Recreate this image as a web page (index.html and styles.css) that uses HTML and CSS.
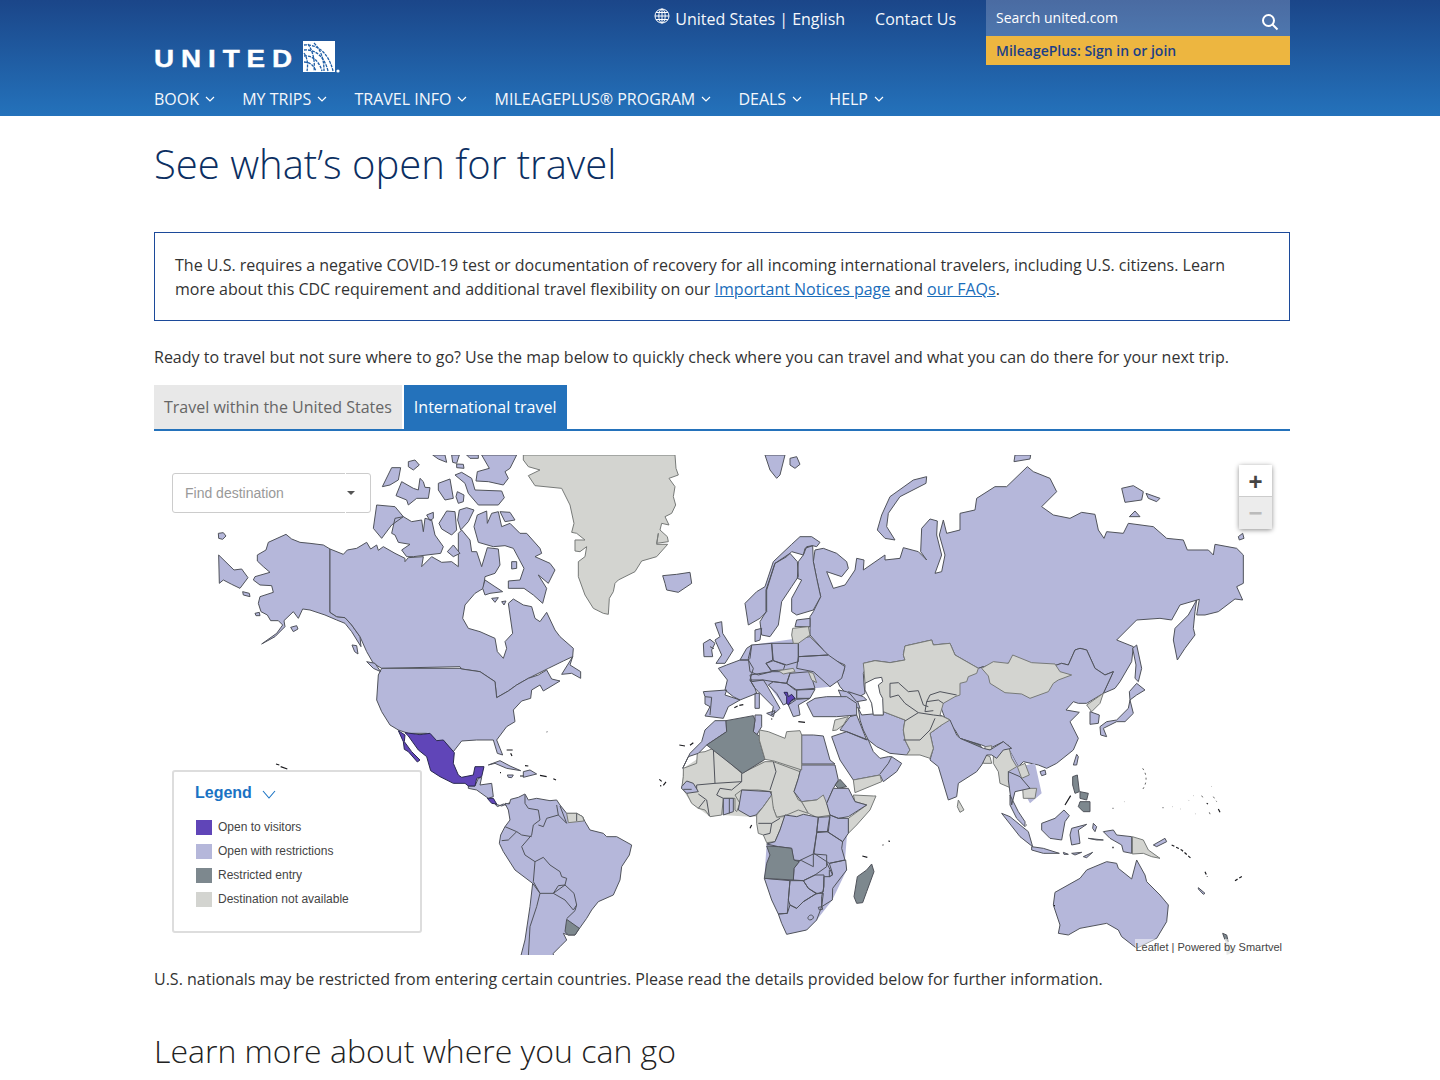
FILE: index.html
```html
<!DOCTYPE html>
<html lang="en">
<head>
<meta charset="utf-8">
<title>See what's open for travel</title>
<link rel="stylesheet" href="styles.css">
</head>
<body>
<header class="site-header">
  <div class="wrap">
    <div class="head-top">
      <a class="logo" href="#">
        <svg class="logo-svg" viewBox="0 0 187 32">
          <text class="logo-word" x="0" y="26" textLength="145" lengthAdjust="spacingAndGlyphs">UNITED</text>
          <rect class="logo-box" x="149" y="0" width="32" height="31"/>
          <g class="logo-arcs">
            <path d="M150 4C162 3 174 10 179 30"/>
            <path d="M150 9C160 8 170 14 174 30"/>
            <path d="M150 15C158 14 165 20 168 30"/>
            <path d="M150 21C156 21 160 25 162 30"/>
            <path d="M160 2C168 10 170 20 170 30"/>
            <path d="M154 3C160 12 161 22 160 30"/>
            <path d="M150 12C154 18 154 25 153 30"/>
          </g>
          <circle class="logo-reg" cx="184" cy="30" r="1.6"/>
        </svg>
      </a>
      <div class="head-links">
        <a class="head-link locale" href="#">
          <svg class="globe" viewBox="0 0 16 16"><circle cx="8" cy="8" r="7"/><ellipse cx="8" cy="8" rx="3.2" ry="7"/><path d="M1 8h14M2 4.500h12M2 11.500h12M8 1v14"/></svg>
          <span>United States | English</span>
        </a>
        <a class="head-link contact" href="#">Contact Us</a>
      </div>
      <div class="account">
        <div class="search"><span>Search united.com</span>
          <svg class="search-icon" viewBox="0 0 18 18"><circle cx="7.500" cy="7.500" r="5.500"/><path d="M11.500 11.500l5 5"/></svg>
        </div>
        <a class="signin" href="#">MileagePlus: Sign in or join</a>
      </div>
    </div>
    <nav class="main-nav">
      <a href="#">BOOK<svg class="caret" viewBox="0 0 10 6"><path d="M1 1l4 4 4-4"/></svg></a>
      <a href="#">MY TRIPS<svg class="caret" viewBox="0 0 10 6"><path d="M1 1l4 4 4-4"/></svg></a>
      <a href="#">TRAVEL INFO<svg class="caret" viewBox="0 0 10 6"><path d="M1 1l4 4 4-4"/></svg></a>
      <a href="#">MILEAGEPLUS® PROGRAM<svg class="caret" viewBox="0 0 10 6"><path d="M1 1l4 4 4-4"/></svg></a>
      <a href="#">DEALS<svg class="caret" viewBox="0 0 10 6"><path d="M1 1l4 4 4-4"/></svg></a>
      <a href="#">HELP<svg class="caret" viewBox="0 0 10 6"><path d="M1 1l4 4 4-4"/></svg></a>
    </nav>
  </div>
</header>
<main class="wrap">
  <h1 class="title">See what’s open for travel</h1>
  <div class="notice">The U.S. requires a negative COVID-19 test or documentation of recovery for all incoming international travelers, including U.S. citizens. Learn more about this CDC requirement and additional travel flexibility on our <a href="#">Important Notices page</a> and <a href="#">our FAQs</a>.</div>
  <p class="intro">Ready to travel but not sure where to go? Use the map below to quickly check where you can travel and what you can do there for your next trip.</p>
  <div class="tabs">
    <a class="tab" href="#">Travel within the United States</a>
    <a class="tab active" href="#">International travel</a>
  </div>
  <div class="map">
    <svg class="world" viewBox="154 455 1136 500">
      <!-- North America -->
      <g transform="translate(160 455) scale(.33333)">
        <path class="r" d="M378 238L395 252 420 262 450 265 490 270 510 282 510 472 530 485 555 488 575 510 600 545 603 575 575 530 555 505 530 495 495 480 450 465 428 462 415 490 400 470 372 497 375 515 345 545 305 567 350 535 368 510 355 497 332 497 322 480 303 470 295 445 300 425 340 412 335 392 300 390 280 375 285 365 330 352 310 335 292 318 292 300 318 285 325 262Z"/>
        <path class="r" d="M176 300L222 345 245 342 264 368 240 400 215 388 190 375 178 385ZM175 235L190 233 198 243 188 253 176 250ZM248 410L268 415 270 425 250 420ZM285 475L298 472 300 482 288 482ZM392 517L410 512 414 522 400 530ZM576 570L590 572 594 597 584 590Z"/>
        <path class="r" d="M510 282L550 298 562 285 590 280 620 262 632 282 650 270 655 286 670 275 705 295 735 310 735 320 745 308 790 305 785 335 815 305 845 322 875 320 895 335 895 235 905 225 930 255 935 290 950 290 965 335 982 278 1015 282 1020 330 1005 355 975 365 970 400 945 415 915 450 908 490 925 520 960 530 1005 550 1012 590 1030 610 1040 580 1035 560 1058 535 1050 480 1045 445 1060 432 1090 450 1115 455 1125 490 1140 500 1160 472 1185 525 1200 545 1240 580 1238 605 1210 618 1165 640 1115 665 1105 670 1070 690 1045 708 1010 728 1005 680 960 650 905 642 900 635 665 640 640 625 620 590 600 545 575 510 555 488 530 485 510 472Z"/>
        <path class="r" d="M665 640L900 640 905 642 960 650 1005 680 1010 728 1045 708 1070 690 1105 670 1135 660 1160 645 1175 672 1200 678 1150 708 1140 690 1115 705 1112 730 1085 738 1060 765 1065 800 1040 815 1010 855 1020 880 1028 900 1012 895 1000 855 950 855 905 858 880 890 850 858 825 860 800 835 745 835 715 825 690 810 665 770 650 735 655 660Z"/>
        <path class="r" d="M1238 605L1205 658 1235 655 1262 670 1262 650 1230 630ZM620 620L645 625 662 650 640 640Z"/>
      </g>
      <!-- Canadian Arctic, Greenland, Iceland -->
      <g transform="translate(370 455) scale(.33333)">
        <path class="r" d="M20 150L75 155 100 185 65 210 35 250 10 220ZM75 190L100 185 125 200 155 195 160 230 165 190 185 195 195 240 220 275 212 295 130 305 110 305 95 285 120 268 85 262 75 240 65 235ZM170 180L190 172 190 190 180 197ZM230 168L255 170 260 225 245 240 215 222 207 205ZM268 165L290 158 312 165 295 200 272 225 263 195ZM312 215L322 180 350 168 352 205 365 175 385 170 395 215 420 205 450 235 470 235 510 280 515 295 495 305 540 325 555 345 535 385 505 360 530 400 518 445 490 420 462 400 415 400 415 378 450 375 462 340 430 280 405 272 370 275 325 262ZM345 375L375 395 398 410 360 415 345 420 338 400ZM365 430L385 428 375 442ZM395 440L408 438 402 450ZM425 320L440 320 440 340 425 342ZM232 290L250 270 270 295 250 305ZM65 38L92 38 85 75 60 90 37 95ZM95 80L130 100 145 105 150 70 160 80 165 97 180 98 175 130 140 130 115 150 110 135 78 122ZM115 20L135 15 148 30 130 45 115 35ZM205 85L240 72 250 130 225 135 205 105ZM262 110L282 120 280 140 265 145 258 125ZM255 60L275 52 305 70 315 105 395 108 403 128 385 150 325 150 295 115 285 85ZM260 27L280 28 282 40 260 38ZM188 0L225 0 230 22 205 12ZM245 0L268 0 260 25 248 22ZM290 0L325 0 325 10 300 10ZM335 0L440 0 420 40 405 50 415 70 400 90 355 80 318 78 322 50 358 40ZM390 170L420 172 435 195 405 200Z"/>
        <path class="n" d="M460 0L915 0 918 40 925 60 897 70 915 95 910 125 917 150 905 175 885 185 897 210 875 205 870 225 892 245 895 260 860 265 865 235 860 268 893 268 860 305 815 318 795 350 745 375 735 385 730 410 718 430 715 478 700 475 670 460 645 420 625 365 625 320 645 305 650 275 630 290 615 288 615 255 645 255 620 235 605 232 612 205 600 150 575 100 495 92 475 62 510 45 475 35 460 15Z"/>
        <path class="r" d="M878 362L920 358 960 352 965 385 925 412 890 405 885 385Z"/>
      </g>
      <!-- Central America, Caribbean -->
      <g transform="translate(160 700) scale(.33333)">
        <path class="r" d="M925 258L945 258 955 235 965 232 960 255 995 250 1000 290 985 295 950 270 925 265ZM1005 312L1025 318 1050 308 1050 322 1030 312 1012 320ZM985 195L1020 182 1050 198 1082 212 1040 205 1005 190ZM1090 215L1110 210 1130 222 1090 232ZM1042 225L1060 225 1055 233 1045 232Z"/>
        <path class="o" d="M735 98L780 104 810 100 830 122 850 120 883 158 880 190 895 225 905 232 940 225 945 200 972 200 965 230 950 235 945 258 925 258 915 250 880 250 840 230 812 212 800 170 775 150 745 108ZM715 92L735 105 733 125 755 155 780 180 772 186 745 155 733 148 730 125ZM982 295L1000 295 1010 312 995 310Z"/>
        <path class="d" d="M348 192L358 195M362 200L382 207M1040 150L1058 150M1052 160L1056 168M1095 197L1105 198M1160 95L1162 96M1020 218L1023 218M1080 228L1090 228M1140 226L1160 230M1180 236L1188 240"/>
      </g>
      <!-- South America -->
      <g transform="translate(390 720) scale(.33333)">
        <path class="r" d="M345 250L358 252 362 238 385 232 405 222 415 240 440 235 480 242 500 240 510 255 530 280 560 280 578 290 585 305 600 330 640 340 650 350 680 350 725 375 718 405 695 440 690 480 670 525 625 545 605 570 590 595 565 630 555 645 535 645 520 640 530 660 510 680 490 700 490 710 392 710 405 660 420 560 428 490 375 450 340 395 328 370 332 345 345 320 360 300 355 270Z"/>
        <path class="b" d="M405 225L405 250 415 265 445 270 450 300 430 315 425 345 395 380 405 405 435 425 430 485M345 320L380 335 355 360 335 362M380 335L395 345 425 350M500 255L505 285 470 295 460 320 445 315M510 258L530 310 505 285M435 425L460 412 480 435 510 455 515 470 530 475 525 495 490 520 450 520 430 485M490 520L505 497 525 495 552 520 560 555 550 570 525 540 490 520M428 490L450 520 440 560 420 620 415 710M560 555L555 572 530 596"/>
        <path class="n" d="M530 280L560 280 578 290 582 303 535 308Z"/>
        <path class="b" d="M560 280L560 303"/>
        <path class="x" d="M530 598L568 625 555 645 535 645 525 635Z"/>
      </g>
      <!-- Sub-Saharan Africa -->
      <g transform="translate(670 720) scale(.33333)">
        <path class="n nb" d="M40 145L130 85 285 125 395 135 395 245 415 285 345 290 260 290 240 290 155 285 120 290 65 250 35 205Z"/>
        <path class="r nb" d="M345 285L445 292 535 295 525 420 530 450 487 540 440 600 410 630 350 643 325 582 283 475 290 372 330 330Z"/>
        <path class="n" d="M40 145L80 130 82 98 105 95 130 85 215 160 285 125 310 125 390 155 385 175 372 215 385 240 395 245 415 280 385 270 350 285 320 292 310 265 300 240 305 215 265 210 215 210 195 225 210 250 200 275 195 270 195 235 160 235 155 285 120 290 105 270 85 265 65 250 50 220 35 205 40 170Z"/>
        <path class="b" d="M130 85L135 190 80 195 80 215M135 190L215 185 215 160M215 185L185 210 150 205 140 225 160 235M310 125L318 155 300 210M85 222L110 240 118 288M105 240L85 265M300 240L310 265"/>
        <path class="r" d="M35 200L50 183 70 190 85 215 50 220 35 205ZM160 235L190 235 190 275 160 285ZM215 210L300 215 305 225 280 260 258 285 240 290 205 270 210 240ZM395 135L495 135 505 180 490 205 470 250 460 235 440 240 395 245 372 215 385 175Z"/>
        <path class="b" d="M40 208L65 208M178 235L178 280"/>
        <path class="n" d="M395 245L440 240 460 225 470 250 485 285 440 292 415 280ZM550 225L610 228 618 228 600 270 560 315 535 340 535 295 590 255 555 245ZM260 285L280 260 305 225 310 265 320 292 340 290 345 290 330 330 315 365 290 368 280 345 265 340 260 310Z"/>
        <path class="b" d="M265 310L305 310 300 340 280 345M305 310L330 295"/>
        <path class="x" d="M495 195L510 178 530 200 505 205Z"/>
        <path class="r" d="M490 205L510 205 535 205 555 245 590 255 535 290 505 295 480 285 470 250ZM345 285L380 290 400 283 445 292 440 340 430 400 430 440 395 422 370 420 365 385 325 380 290 372 315 365 330 330ZM445 292L480 290 475 335 440 335ZM480 285L505 295 535 295 535 340 518 365 472 335ZM440 338L472 335 518 365 515 385 525 420 478 430 432 400ZM388 422L430 402 470 405 470 440 435 465 400 482 370 480 372 445ZM478 430L527 420 530 450 488 505 487 540 455 560 455 530 462 500 462 470 480 470 488 462ZM400 482L435 465 462 465 460 515 440 522 415 505ZM283 475L360 482 355 540 352 580 325 582 305 540ZM360 482L400 482 415 505 440 520 400 545 380 565 360 555 355 540ZM352 580L360 555 380 565 400 545 440 520 460 520 455 560 440 600 410 630 350 643 335 610 325 582Z"/>
        <path class="x" d="M290 378L325 380 365 385 372 420 388 425 372 445 370 480 283 475 290 430 300 405ZM605 432L612 455 590 515 578 548 560 550 552 530 562 470 590 450Z"/>
        <path class="b" d="M470 428L488 465 478 470 478 450M414 592C420 580 432 586 430 594 426 602 412 602 414 592ZM445 562L456 560 458 568 448 570Z"/>
      </g>
      <!-- North Africa, Arabia -->
      <g transform="translate(640 600) scale(.33333)">
        <path class="r" d="M258 362L260 395 200 435 175 460 145 470 128 505 150 460 185 425 195 390 225 362ZM345 345L365 345 365 380 350 405 340 395 345 360ZM485 405L520 405 550 408 570 480 585 492 485 492Z"/>
        <path class="x" d="M258 362L340 347 345 360 340 395 360 410 358 420 375 478 308 520 200 435 260 395Z"/>
        <path class="n" d="M358 390L385 395 435 415 440 395 480 392 485 405 485 510 402 483 375 478 358 420Z"/>
        <path class="r" d="M575 410L620 395 685 420 700 455 720 475 745 470 755 470 785 490 770 515 730 545 720 525 640 540 620 510 600 480ZM650 345L680 420 620 395 600 390 630 350Z"/>
        <path class="b" d="M755 470L745 490 720 522"/>
        <path class="n" d="M640 540L720 525 725 545 645 578ZM585 360L625 350 610 375 590 390 578 392Z"/>
        <path class="d" d="M118 435L135 438M150 436L160 428M58 538L65 544M78 546L70 556M60 557L64 558M745 723L750 724M728 734L730 736M667 768L682 772M330 685L335 675"/>
      </g>
      <!-- Russia, China, East Asia, Oceania -->
      <g transform="translate(940 455) scale(.33333)">
        <path class="r" d="M-358 425L-370 370-380 320-375 285-350 280-310 295-280 320-275 340-295 365-340 350-320 400-285 390-255 345-250 310-228 315-230 345-165 300-165 315-120 310-110 278-65 290-40 315-58 290-55 220-30 192-8 198-10 240 5 300-15 355 5 350 15 300-2 240 10 195 20 235 60 225 60 175 105 165 110 130 165 95 200 95 262 35 280 50 330 70 350 110 305 155 340 180 390 190 425 172 465 178 475 225 492 250 500 230 550 235 565 205 640 215 680 250 730 255 742 285 805 285 820 300 825 268 890 280 910 300 910 385 890 395 908 435 885 432 835 470 795 480 770 480 778 433 720 450 695 495 660 490 590 495 530 555 580 575 575 620 540 680 525 700 490 715 520 650 495 660 465 640 440 585 420 580 405 585 385 630 365 625 320 640 265 625 220 605 205 625 130 635 115 640 45 600 30 565-20 570-25 555-105 573-110 600-105 615-150 623-195 617-230 625-225 645-230 655-228 690-225 715-250 730-285 712-300 695-310 675-290 655-285 630-350 600-350 585-390 540-390 520-390 485-380 470Z"/>
        <path class="r" d="M115 640L130 635 205 625 220 605 265 625 320 640 365 625 385 630 405 585 420 580 440 585 465 640 495 660 520 650 490 715 440 745 415 745 400 740 378 765 418 772 390 800 415 850 400 885 350 925 320 940 295 930 250 920 235 935 205 880 190 860 150 880 125 870 60 850 45 825 15 790 0 750 20 700 60 660Z"/>
        <path class="r nb" d="M205 880L235 935 285 925 305 1015 270 1045 248 1005 225 1010 215 1050 205 975 175 950 160 925Z"/>
        <path class="n" d="M440 750L490 715 480 745 455 770ZM55 1035L72 1065 60 1072 52 1055ZM135 875L155 872 155 885 135 885ZM125 895L150 905 155 925 130 925ZM160 890L205 870 215 910 230 935 205 950 215 1000 180 985 175 950 160 925ZM577 1145L610 1155 625 1185 660 1210 635 1205 610 1195 577 1197ZM232 935L255 925 268 960 245 970ZM248 1000L290 1000 285 1030 250 1030Z"/>
        <path class="r" d="M450 770L478 780 475 805 450 808ZM205 950L240 965 270 1000 225 1010 215 1050 205 975ZM210 1020L235 1070 255 1100 255 1115 230 1090 210 1050ZM570 735L580 775 555 800 530 800 490 820 500 845 482 840 480 815 500 800 530 795 565 760ZM590 685L615 705 590 720 570 735 568 710ZM770 435L765 470 760 520 765 540 735 580 712 615 700 555 705 520 745 480ZM590 570L605 640 595 680 585 670 588 630 578 580ZM222 20L270 12 272 0 225 0ZM545 100L580 92 610 110 605 135 555 142ZM618 115L660 130 650 140 625 130ZM568 185L585 168 600 185ZM895 245L908 235 912 250 898 255ZM400 930L410 898 415 905 410 930ZM300 950L315 945 318 958 305 962ZM185 1075L210 1085 265 1130 278 1175 240 1145ZM275 1175L310 1180 358 1195 310 1195 275 1185ZM305 1105L345 1090 372 1065 388 1082 375 1100 365 1155 330 1150 305 1125ZM395 1120L440 1108 415 1125 420 1165 395 1170 390 1140ZM460 1105L470 1115 465 1130 458 1120ZM490 1130L520 1125 530 1140 575 1145 575 1195 550 1190 545 1170 510 1150ZM640 1170L675 1150 680 1160 650 1175ZM345 1312L420 1270 440 1245 500 1220 530 1225 535 1240 575 1272 590 1215 615 1260 620 1280 660 1320 685 1350 680 1400 650 1450 590 1480 545 1445 535 1425 500 1405 420 1420 385 1440 355 1435 360 1410 340 1350Z"/>
        <path class="r" d="M445 1150L490 1155 470 1155ZM370 1192L385 1198 372 1198ZM395 1195L425 1192 405 1200ZM430 1205L458 1192 440 1208ZM775 1298L795 1315 790 1318 775 1302Z"/>
        <path class="x" d="M60 850L120 870 130 885 100 885 60 870ZM398 965L412 960 418 1010 405 1015 398 990ZM420 1040L450 1040 450 1070 430 1070 415 1055ZM420 1010L445 1015 440 1035 420 1030ZM848 1435L860 1440 865 1460 855 1455Z"/>
        <path class="n nz" d="M855 1450L885 1490 860 1500Z"/>
        <path class="d" d="M375 1050L392 1022M258 1110L260 1110M518 1060L520 1060M668 1058L670 1058M800 1045L804 1047M835 1062L840 1072M520 1175L518 1180M342 1352L345 1352"/>
        <path class="d dash" d="M695 1170L725 1185 755 1212M795 1250L802 1265M885 1277L910 1262"/>
        <path class="f" d="M608 940C622 960 622 985 606 1006M815 995L816 996M552 1040L553 1040M697 1055L698 1055M722 1062L723 1062M745 1035L746 1036M760 1022L761 1022M785 1022L790 1030M820 1025L830 1040M765 1075L766 1076M808 1072L812 1082"/>
      </g>
      <!-- Central Asia, India, Iran, Mongolia -->
      <g transform="translate(840 640) scale(.33333)">
        <path class="r" d="M300 225L330 240 350 285 360 295 430 325 450 330 490 305 515 325 490 330 470 355 455 345 440 345 425 375 410 395 355 430 350 470 325 480 295 380 270 360 280 325 270 280 305 255ZM55 205L65 225 120 220 130 215 195 240 190 270 195 300 210 330 200 345 150 340 110 320 85 300 70 270 60 240Z"/>
        <path class="r" d="M-5 150L20 155 50 175 60 205 40 200 10 185Z"/>
        <path class="n" d="M70 70L105 62 150 68 195 60 190 45 195 18 275 0 280 15 330 10 345 45 415 85 410 100 385 110 380 125 360 130 360 165 345 170 310 190 300 225 330 240 305 255 270 280 280 325 270 355 240 345 200 345 210 330 195 300 190 270 195 240 130 215 130 225 100 225 95 185 75 130 72 90Z"/>
        <path class="w" d="M75 130L105 115 125 112 128 125 115 135 120 160 128 175 130 225 100 225 95 190 75 150Z"/>
        <path class="b" d="M150 172L150 130 175 128 205 155 235 152 250 195 265 200M150 172L175 165 195 190 235 218 195 243M235 218L280 225 305 228M190 300L240 300 270 270 285 235M350 165L300 155 270 165 260 185 295 180 310 190M260 185L255 215 280 212"/>
        <path class="n" d="M425 85L460 65 505 70 518 45 575 68 645 72 660 95 695 105 655 120 640 130 625 155 570 175 545 162 495 158 450 130 445 108Z"/>
      </g>
      <!-- Scandinavia, Arctic Ocean -->
      <g transform="translate(660 455) scale(.33333)">
        <path class="r" d="M255 445L290 410 315 395 340 320 395 268 420 245 455 245 480 262 470 275 458 272 435 280 430 300 395 290 380 305 345 325 320 405 320 470 300 490 265 510ZM318 405L345 325 390 295 412 320 415 365 395 395 365 440 355 510 330 545 305 540 300 500 318 470ZM430 300L440 275 458 272 460 320 470 370 482 425 460 465 410 480 395 470 395 430 425 375 412 370 415 320ZM315 0L375 0 360 60 350 70 330 45ZM390 10L410 5 420 28 405 40 390 30ZM800 65L798 85 720 125 685 175 680 215 705 255 675 250 652 225 665 180 690 125 760 75ZM285 525L305 520 300 555 285 560Z"/>
      </g>
      <!-- Europe -->
      <g transform="translate(640 600) scale(.33333)">
        <path class="r nb" d="M300 180L335 135 475 115 565 165 615 200 570 260 525 265 510 295 430 315 385 255 345 265 255 270 262 240Z"/>
        <path class="r" d="M235 205L260 195 300 180 325 180 340 205 330 240 345 265 350 280 300 300 280 290 255 270 262 240ZM190 275L260 270 255 285 300 300 265 320 250 355 195 348 210 320 195 312 195 290ZM335 135L395 130 398 180 378 190 395 215 355 225 330 215 325 175ZM300 180L320 145 335 135 330 175 325 180ZM395 130L475 130 475 185 440 195 400 182ZM378 190L400 182 435 195 430 210 395 212ZM475 170L565 165 615 200 605 235 570 260 520 215 470 205ZM475 115L510 110 550 150 565 165 475 170ZM470 60L510 55 510 80 465 80ZM450 220L510 215 525 265 465 270 440 250ZM470 270L525 268 510 295 470 295ZM445 315L470 298 510 295 475 315 480 345 460 350ZM500 310L525 295 560 290 620 290 650 310 650 345 590 350 520 350ZM625 275L670 290 680 300 650 305ZM330 225L395 215 440 215 450 220 440 250 400 245 370 240 335 245ZM330 240L370 240 380 255 420 325 410 335 395 345 400 320 355 275 345 265ZM380 340L405 332 400 350ZM345 280L358 280 358 325 345 325ZM385 255L400 245 440 250 470 270 470 295 430 315 410 280ZM225 70L245 65 248 100 280 150 255 190 228 190 245 165 225 120 240 110ZM190 130L210 118 225 130 215 150 218 170 192 170Z"/>
        <path class="b" d="M195 290L215 292 210 345M210 140L222 146"/>
        <path class="n" d="M458 85L505 80 510 105 475 130 460 130 455 105ZM415 212L460 205 465 215 430 222ZM505 215L520 220 530 248 515 240Z"/>
        <path class="o" d="M432 277L442 277 445 290 455 283 465 295 455 300 445 315 440 310 440 290Z"/>
        <path class="d" d="M283 323L293 318M298 316L310 314M393 357L397 357M475 365L495 367"/>
      </g>
    </svg>
    <div class="finder"><span class="finder-text">Find destination</span><span class="finder-caret"></span></div>
    <div class="zoom-ctl">
      <a class="zoom-btn" href="#">+</a>
      <a class="zoom-btn off" href="#">−</a>
    </div>
    <div class="legend">
      <div class="legend-title">Legend<svg class="legend-chev" viewBox="0 0 14 9"><path d="M1 1l6 7 6-7"/></svg></div>
      <ul class="legend-list">
        <li><span class="sw sw-o"></span>Open to visitors</li>
        <li><span class="sw sw-r"></span>Open with restrictions</li>
        <li><span class="sw sw-x"></span>Restricted entry</li>
        <li><span class="sw sw-n"></span>Destination not available</li>
      </ul>
    </div>
    <div class="attribution">Leaflet | Powered by Smartvel</div>
  </div>
  <p class="note">U.S. nationals may be restricted from entering certain countries. Please read the details provided below for further information.</p>
  <h2 class="subtitle">Learn more about where you can go</h2>
</main>
</body>
</html>
```

FILE: styles.css
```css
* { box-sizing: border-box; }
html, body { margin: 0; padding: 0; background: #fff; }
body { font-family: "Open Sans", sans-serif; color: #333; font-size: 16px; line-height: 24px; }
a { text-decoration: none; color: inherit; }
.wrap { width: 1136px; margin: 0 0 0 154px; }

.site-header { height: 116px; background: linear-gradient(#1b4689, #2472bb); color: #fff; }
.head-top { display: flex; height: 82px; }
.logo { display: block; margin-top: 41px; width: 187px; height: 32px; }
.logo-svg { display: block; width: 187px; height: 32px; }
.logo-word { font-family: "Liberation Sans", sans-serif; font-weight: 700; font-size: 24px; letter-spacing: 6px; fill: #fff; stroke: #fff; stroke-width: .4; }
.logo-box { fill: #fff; }
.logo-arcs path { fill: none; stroke: #1f5ea6; stroke-width: 1.3; stroke-dasharray: 3 1; }
.logo-reg { fill: #fff; }
.head-links { display: flex; margin-left: auto; margin-right: 30px; gap: 30px; height: 38px; align-items: center; color: #f4f7fb; }
.head-link { display: flex; align-items: center; }
.globe { width: 16px; height: 16px; margin-right: 5px; margin-top: -6px; fill: none; stroke: #fff; stroke-width: 1; }
.account { width: 304px; height: 65px; }
.search { height: 36px; padding-left: 10px; display: flex; align-items: center; justify-content: space-between; background: linear-gradient(#4a6ba2, #4e77ae); font-size: 14px; color: #fff; }
.search-icon { width: 18px; height: 18px; margin-right: 11px; margin-top: 8px; fill: none; stroke: #fff; stroke-width: 2; }
.signin { display: block; height: 29px; line-height: 30px; padding-left: 10px; background: #edb640; color: #1b3f87; font-size: 14px; font-weight: 600; }
.main-nav { display: flex; height: 34px; align-items: center; gap: 27.2px; color: #f4f7fb; }
.main-nav a { display: flex; align-items: center; }
.caret { width: 10px; height: 6px; margin-left: 6px; fill: none; stroke: #fff; stroke-width: 1.2; }

.title { margin: 0; padding-top: 20px; height: 116px; font-size: 40px; line-height: 56px; font-weight: 300; color: #0c2f62; }
.notice { height: 89px; padding: 20px; border: 1px solid #1c4a9a; }
.notice a, .notice a:visited { color: #1a6dbb; text-decoration: underline; }
.intro { margin: 24px 0 16px; }
.tabs { display: flex; gap: 2px; height: 46px; border-bottom: 2px solid #2472bb; }
.tab { height: 44px; padding: 10px; background: #e8e8e8; color: #666; }
.tab.active { padding-right: 11px; background: #2472bb; color: #fff; }

.map { position: relative; height: 500px; margin-top: 24px; overflow: hidden; font-family: "Liberation Sans", sans-serif; }
.world { display: block; width: 1136px; height: 500px; }
.world path { vector-effect: non-scaling-stroke; stroke: #50535b; stroke-width: 1; stroke-linejoin: round; fill: none; }
.world .r { fill: #b5b7da; }
.world .o { fill: #6045b8; stroke: #2a2a50; }
.world .x { fill: #7d888e; }
.world .n { fill: #d3d4d0; stroke: #777a78; }
.world .nz { stroke: none; }
.world .nb { stroke: none; }
.world .w { fill: #fff; }
.world .d { stroke: #1b1b1f; stroke-width: 1.2; }
.world .dash { stroke-dasharray: 3 2; }
.world .f { stroke: #666; stroke-dasharray: 2 3; }

.finder { position: absolute; left: 18px; top: 18px; width: 199px; height: 40px; padding-left: 12px; border: 1px solid #ccc; border-radius: 3px; background: #fff; display: flex; align-items: center; justify-content: space-between; font-size: 14px; color: #999; }
.finder::before { content: ""; position: absolute; left: 172px; top: -1px; bottom: -1px; width: 1px; border-top: 1px solid #fff; border-bottom: 1px solid #fff; }
.finder-caret { width: 0; height: 0; margin-right: 15px; border-left: 4px solid transparent; border-right: 4px solid transparent; border-top: 4px solid #555; }
.zoom-ctl { position: absolute; right: 18px; top: 10px; width: 33px; border-radius: 2px; box-shadow: 0 1px 5px rgba(0,0,0,.45); background: #fff; }
.zoom-btn { display: block; height: 32px; text-align: center; font-size: 24px; font-weight: 700; line-height: 34px; color: #444; background: #fff; border-bottom: 1px solid #ccc; }
.zoom-btn.off { border-bottom: 0; background: #ececec; color: #bbb; line-height: 32px; }
.legend { position: absolute; left: 18px; top: 315px; width: 250px; height: 163px; padding: 10px 21px; border: 2px solid #ddd; border-radius: 3px; background: #fff; font-size: 12px; color: #444; }
.legend-title { display: flex; align-items: center; height: 22px; font-size: 16px; font-weight: 700; color: #1a73c4; }
.legend-chev { width: 14px; height: 9px; margin-left: 10px; margin-top: 3px; fill: none; stroke: #1a73c4; stroke-width: 1.1; }
.legend-list { list-style: none; margin: 11px 0 0; padding: 0 0 0 1px; }
.legend-list li { display: flex; align-items: center; height: 24px; }
.sw { width: 16px; height: 15px; margin-right: 6px; }
.sw-o { background: #6045b8; }
.sw-r { background: #b5b7da; }
.sw-x { background: #7d888e; }
.sw-n { background: #d3d4d0; }
.attribution { position: absolute; right: 8px; bottom: 0; height: 16px; line-height: 16px; font-size: 11px; color: #444; background: rgba(255,255,255,.5); }

.note { margin: 12px 0 0; }
.subtitle { margin: 38px 0 0; font-size: 32px; line-height: 44px; font-weight: 300; color: #222; }
```
